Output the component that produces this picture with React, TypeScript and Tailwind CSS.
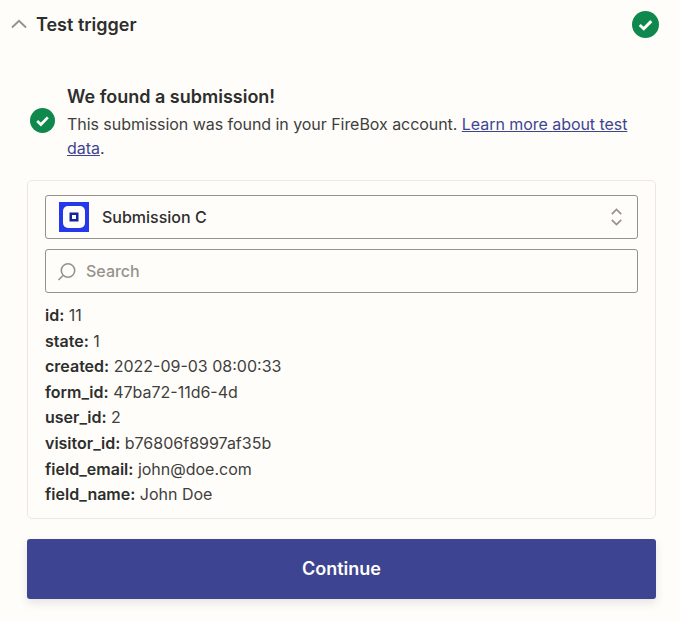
const rows: [string, string][] = [
  ["id:", "11"],
  ["state:", "1"],
  ["created:", "2022-09-03 08:00:33"],
  ["form_id:", "47ba72-11d6-4d"],
  ["user_id:", "2"],
  ["visitor_id:", "b76806f8997af35b"],
  ["field_email:", "john@doe.com"],
  ["field_name:", "John Doe"],
];

function Check({ size, className }: { size: number; className?: string }) {
  return (
    <svg width={size} height={size} viewBox="0 0 28 28" className={className}>
      <circle cx="14" cy="14" r="14" fill="#0f884e" />
      <path d="M8 14.5l4.2 4L20 10.5" fill="none" stroke="#fffdf9" strokeWidth="3" />
    </svg>
  );
}

export default function App() {
  return (
    <div className="w-[680px] h-[621px] bg-[#fffdf9] text-[#2d2e2e] overflow-hidden font-['Inter',sans-serif]">
      <div className="h-[50px] flex items-center pl-[11px] pr-[21px]">
        <svg width="16" height="10" viewBox="0 0 16 10" className="mr-[9px] mt-[-2px]">
          <path d="M1 8.5L8 1.8l7 6.7" fill="none" stroke="#95928e" strokeWidth="1.9" />
        </svg>
        <span className="text-[18px] leading-[24px] font-semibold">Test trigger</span>
        <Check size={27} className="ml-auto shrink-0 mt-[-2px]" />
      </div>

      <div className="flex items-center mt-[35px] pl-[30px] pr-[40px]">
        <Check size={25} className="shrink-0 mt-[-4px]" />
        <div className="ml-[12px]">
          <div className="text-[18px] leading-[24px] font-semibold">We found a submission!</div>
          <p className="text-[16px] leading-[24px] text-[#403f3e] mt-[3px] tracking-[-0.05px]">
            This submission was found in your FireBox account.{" "}
            <a className="text-[#3d4592] underline">Learn more about test data</a>.
          </p>
        </div>
      </div>

      <div className="ml-[27px] mt-[20px] w-[629px] h-[339px] border border-[#ece9e4] rounded-[5px] px-[17px] pt-[14px]">
        <div className="h-[44px] border border-[#95928e] rounded-[3px] flex items-center pl-[13px] pr-[15px]">
          <svg width="30" height="30" viewBox="0 0 30 30" className="shrink-0">
            <rect width="30" height="30" fill="#2639ea" />
            <rect x="4" y="4" width="22" height="22" rx="5" fill="#fffdf9" />
            <rect x="10.5" y="10.5" width="9" height="9" fill="#13249c" />
            <rect x="13" y="13" width="4" height="4" fill="#fffdf9" />
          </svg>
          <span className="ml-[13px] text-[16px] leading-[20px] font-medium">Submission C</span>
          <svg width="11" height="18" viewBox="0 0 11 18" className="ml-auto">
            <path d="M.8 6.2L5.5 1.5l4.7 4.7M.8 11.8l4.7 4.7 4.7-4.7" fill="none" stroke="#95928e" strokeWidth="1.7" />
          </svg>
        </div>
        <div className="h-[44px] mt-[10px] border border-[#95928e] rounded-[3px] flex items-center pl-[11px]">
          <svg width="20" height="20" viewBox="0 0 20 20" className="shrink-0">
            <circle cx="11" cy="9.5" r="6.7" fill="none" stroke="#95928e" strokeWidth="1.6" />
            <path d="M6 14.5L1.5 19" fill="none" stroke="#95928e" strokeWidth="1.6" />
          </svg>
          <span className="ml-[9px] text-[16px] leading-[20px] font-medium text-[#95928e]">Search</span>
        </div>
        <div className="mt-[10px] text-[16px] leading-[25.6px]">
          {rows.map(([k, v]) => (
            <div key={k}>
              <span className="font-semibold">{k}</span> <span className="text-[#403f3e]">{v}</span>
            </div>
          ))}
        </div>
      </div>

      <button className="block ml-[27px] mt-[20px] w-[629px] h-[60px] pb-[2px] bg-[#3d4592] rounded-[3px] text-[#fffdf9] text-[18px] font-semibold shadow-[0_4px_8px_rgba(45,46,46,0.12)]">
        Continue
      </button>
    </div>
  );
}
